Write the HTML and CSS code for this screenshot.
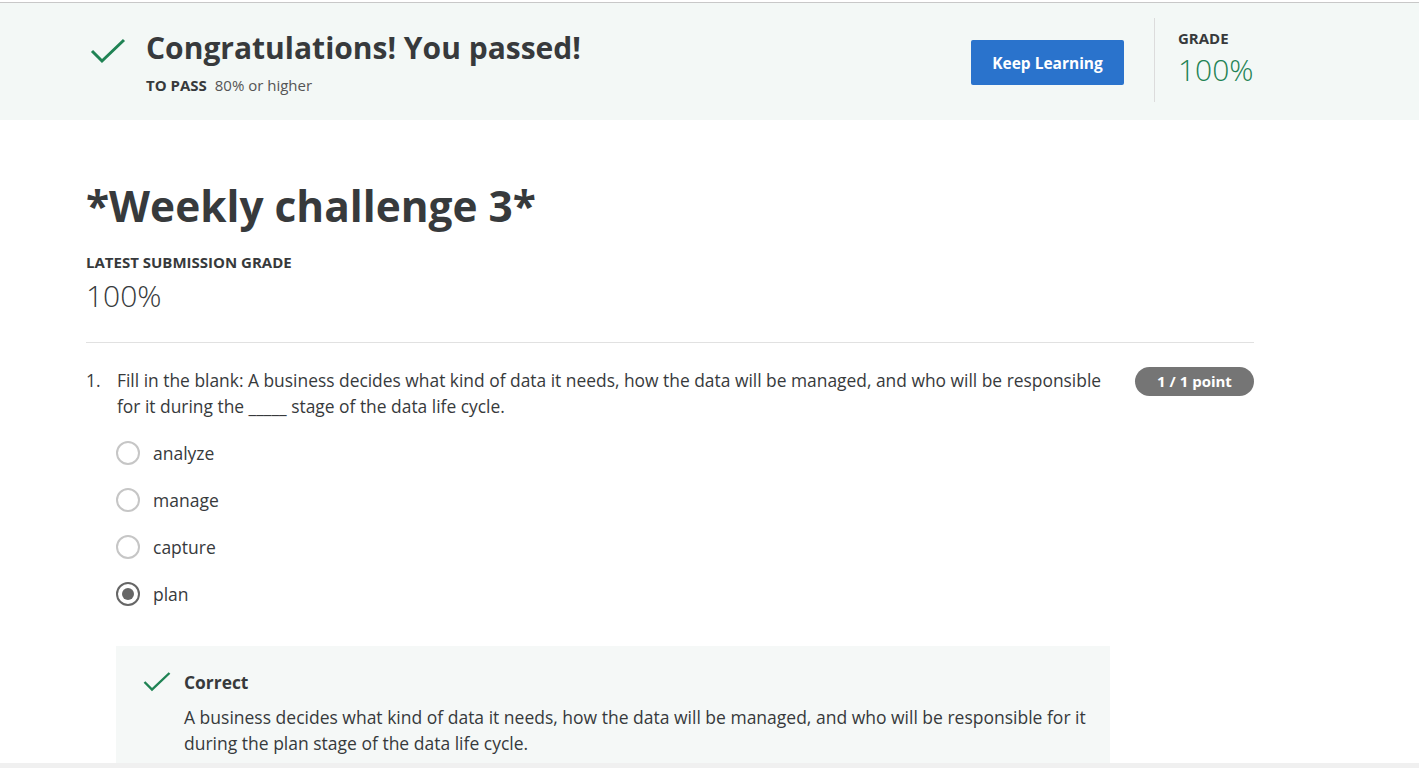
FILE: index.html
```html
<!DOCTYPE html>
<html lang="en">
<head>
<meta charset="utf-8">
<title>Weekly challenge 3</title>
<link rel="stylesheet" href="styles.css">
</head>
<body>
<div class="topline"></div>
<header class="banner">
  <div class="banner-inner">
    <div class="pass">
      <svg class="pass-check" width="36" height="26" viewBox="0 0 36 26"><path d="M2 13 L12 23 L34 2" fill="none" stroke="#1f8354" stroke-width="3"/></svg>
      <div class="pass-text">
        <h2 class="pass-title">Congratulations! You passed!</h2>
        <div class="pass-sub"><span class="pass-label">TO PASS</span> 80% or higher</div>
      </div>
    </div>
    <button class="keep-btn">Keep Learning</button>
    <div class="grade-box">
      <div class="grade-label">GRADE</div>
      <div class="grade-value">100%</div>
    </div>
  </div>
</header>
<main class="content">
  <h1 class="title">*Weekly challenge 3*</h1>
  <div class="latest-label">LATEST SUBMISSION GRADE</div>
  <div class="latest-value">100%</div>
  <hr class="sep">
  <section class="question">
    <div class="q-head">
      <div class="q-num">1.</div>
      <div class="q-text">Fill in the blank: A business decides what kind of data it needs, how the data will be managed, and who will be responsible for it during the _____ stage of the data life cycle.</div>
      <div class="q-badge">1 / 1 point</div>
    </div>
    <ul class="options">
      <li class="option"><span class="radio"></span><span class="opt-label">analyze</span></li>
      <li class="option"><span class="radio"></span><span class="opt-label">manage</span></li>
      <li class="option"><span class="radio"></span><span class="opt-label">capture</span></li>
      <li class="option"><span class="radio checked"></span><span class="opt-label">plan</span></li>
    </ul>
    <div class="feedback">
      <svg class="fb-check" width="28" height="20" viewBox="0 0 28 20"><path d="M1.5 10 L9 17.5 L26.5 1" fill="none" stroke="#1f8354" stroke-width="2.4"/></svg>
      <div class="fb-body">
        <div class="fb-title">Correct</div>
        <p class="fb-text">A business decides what kind of data it needs, how the data will be managed, and who will be responsible for it during the plan stage of the data life cycle.</p>
      </div>
    </div>
  </section>
</main>
<div class="bottom-strip"></div>
</body>
</html>
```
FILE: styles.css
```css
* { box-sizing: border-box; }
html, body { margin: 0; padding: 0; }
body {
  font-family: "Open Sans", "Liberation Sans", sans-serif;
  color: #373a3c;
  background: #fff;
  overflow: hidden;
  height: 768px;
}
.topline {
  height: 3px;
  border-bottom: 1px solid #c8c8c8;
}
.banner {
  background: #f3f8f6;
  height: 117px;
}
.banner-inner {
  display: flex;
  align-items: flex-start;
  margin-left: 86px;
  width: 1168px;
  height: 100%;
}
.pass {
  display: flex;
  align-items: flex-start;
  flex: 1;
  padding-top: 27px;
}
.pass-check { margin: 8px 0 0 4px; }
.pass-text { margin-left: 20px; }
.pass-title {
  margin: 0;
  font-size: 30px;
  font-weight: 700;
  line-height: 36px;
}
.pass-sub {
  margin-top: 9px;
  font-size: 15px;
  color: #555;
  line-height: 20px;
}
.pass-label { font-weight: 700; color: #373a3c; margin-right: 4px; }
.keep-btn {
  margin-top: 37px;
  width: 153px;
  height: 45px;
  background: #2a73cc;
  color: #fff;
  border: none;
  border-radius: 2px;
  font-family: inherit;
  font-size: 15.5px;
  font-weight: 700;
}
.grade-box {
  margin: 15px 0 0 30px;
  border-left: 1px solid #dcdcdc;
  height: 84px;
  padding: 10px 0 0 23px;
  width: 100px;
}
.grade-label { font-size: 15px; font-weight: 700; line-height: 21px; }
.grade-value { font-size: 30px; font-weight: 300; color: #1f8354; line-height: 41px; }
.content {
  margin-left: 86px;
  width: 1168px;
}
.title {
  margin: 55px 0 0;
  font-size: 42.4px;
  font-weight: 700;
  line-height: 62px;
}
.latest-label {
  margin-top: 15px;
  font-size: 15px;
  font-weight: 700;
  line-height: 20px;
}
.latest-value {
  margin-top: 6px;
  font-size: 30px;
  font-weight: 300;
  line-height: 36px;
}
.sep {
  margin: 28px 0 0;
  border: none;
  border-top: 1px solid #e1e1e1;
}
.question { padding-top: 24px; }
.q-head { display: flex; align-items: flex-start; }
.q-num { width: 31px; font-size: 17.4px; line-height: 26px; color: #373a3c; }
.q-text { width: 1005px; font-size: 17.4px; line-height: 26px; color: #373a3c; }
.q-badge {
  margin-left: auto;
  margin-top: 0;
  background: #757575;
  color: #fff;
  font-size: 15px;
  font-weight: 700;
  border-radius: 15px;
  height: 29px;
  line-height: 29px;
  width: 119px;
  text-align: center;
}
.options {
  list-style: none;
  margin: 22px 0 0 30px;
  padding: 0;
  display: flex;
  flex-direction: column;
  gap: 23px;
}
.option { display: flex; align-items: center; height: 24px; }
.radio {
  width: 24px; height: 24px;
  border: 2px solid #c6c6c6;
  border-radius: 50%;
  display: flex; align-items: center; justify-content: center;
  background: #fff;
}
.radio.checked { border-color: #666; }
.radio.checked::after {
  content: "";
  width: 12px; height: 12px; border-radius: 50%; background: #666;
}
.opt-label { margin-left: 13px; font-size: 17.5px; color: #373a3c; }
.feedback {
  margin: 40px 0 0 30px;
  width: 994px;
  background: #f5f8f7;
  display: flex;
  align-items: flex-start;
  padding: 24px 0 8px 27px;
}
.fb-check { margin-top: 2px; }
.fb-body { margin-left: 13px; }
.fb-title { font-size: 17.4px; font-weight: 700; line-height: 24px; }
.fb-text { margin: 10px 0 0; font-size: 17.5px; line-height: 26px; width: 910px; }
.bottom-strip {
  position: fixed; left: 0; right: 0; bottom: 0; height: 5px; background: #f0f0f0;
}
```
